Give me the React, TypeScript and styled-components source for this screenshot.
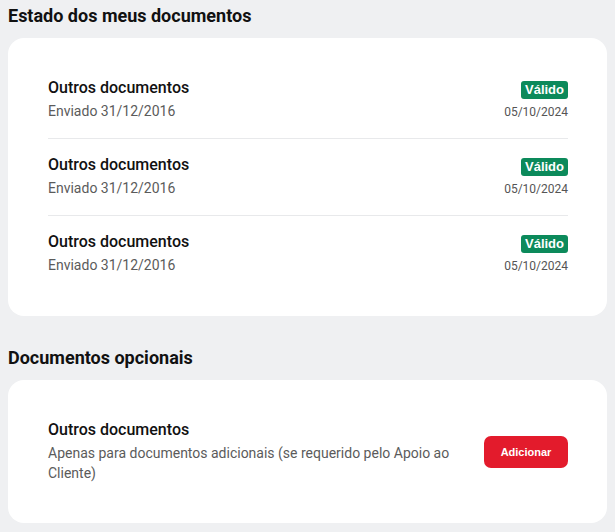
import React from 'react';
import styled, { createGlobalStyle } from 'styled-components';

type DocumentRow = {
  title: string;
  sent: string;
  status: string;
  date: string;
};

const documents: DocumentRow[] = [
  { title: 'Outros documentos', sent: 'Enviado 31/12/2016', status: 'Válido', date: '05/10/2024' },
  { title: 'Outros documentos', sent: 'Enviado 31/12/2016', status: 'Válido', date: '05/10/2024' },
  { title: 'Outros documentos', sent: 'Enviado 31/12/2016', status: 'Válido', date: '05/10/2024' },
];

const GlobalStyle = createGlobalStyle`
  html, body {
    margin: 0;
    padding: 0;
    background: #eff0f2;
  }

  body {
    font-family: Roboto, "Liberation Sans", Arial, sans-serif;
    color: #111;
  }
`;

const Page = styled.div`
  padding: 4px 8px 8px 8px;
  display: flex;
  flex-direction: column;
  gap: 30px;
`;

const Section = styled.section`
  display: flex;
  flex-direction: column;
  gap: 10px;
`;

const SectionTitle = styled.h2`
  margin: 0;
  font-size: 18px;
  line-height: 24px;
  font-weight: 700;
  color: #111;
`;

const Card = styled.div<{ $bottom?: number }>`
  background: #fff;
  border-radius: 16px;
  padding: 40px 39px ${(p) => p.$bottom ?? 40}px 40px;
`;

const Row = styled.div`
  display: flex;
  justify-content: space-between;
  align-items: flex-start;

  & + & {
    border-top: 1px solid #e8e9eb;
    margin-top: 17px;
    padding-top: 16px;
  }
`;

const Info = styled.div`
  display: flex;
  flex-direction: column;
  gap: 3px;
`;

const DocTitle = styled.div`
  font-size: 16px;
  line-height: 20px;
  font-weight: 500;
  color: #111;
`;

const DocText = styled.div`
  font-size: 14px;
  line-height: 20px;
  color: #5b5b5b;
`;

const Status = styled.div`
  display: flex;
  flex-direction: column;
  align-items: flex-end;
  gap: 5px;
  margin-top: 3px;
`;

const Badge = styled.span`
  display: inline-block;
  background: #0c8a5b;
  color: #fff;
  font-family: "Liberation Sans", Arial, sans-serif;
  font-weight: 700;
  font-size: 13px;
  line-height: 18px;
  padding: 0 4px;
  border-radius: 3px;
`;

const DateText = styled.span`
  font-size: 12px;
  line-height: 16px;
  color: #555;
`;

const OptionalRow = styled.div`
  display: flex;
  align-items: center;
  justify-content: space-between;
  gap: 24px;
`;

const AddButton = styled.button`
  flex-shrink: 0;
  width: 84px;
  height: 32px;
  border: none;
  border-radius: 7px;
  background: #e31b2c;
  color: #fff;
  font-family: "Liberation Sans", Arial, sans-serif;
  font-weight: 700;
  font-size: 11px;
  cursor: pointer;
`;

const App: React.FC = () => {
  return (
    <>
      <GlobalStyle />
      <Page>
        <Section>
          <SectionTitle>Estado dos meus documentos</SectionTitle>
          <Card $bottom={41}>
            {documents.map((doc, i) => (
              <Row key={i}>
                <Info>
                  <DocTitle>{doc.title}</DocTitle>
                  <DocText>{doc.sent}</DocText>
                </Info>
                <Status>
                  <Badge>{doc.status}</Badge>
                  <DateText>{doc.date}</DateText>
                </Status>
              </Row>
            ))}
          </Card>
        </Section>

        <Section>
          <SectionTitle>Documentos opcionais</SectionTitle>
          <Card>
            <OptionalRow>
              <Info>
                <DocTitle>Outros documentos</DocTitle>
                <DocText>
                  Apenas para documentos adicionais (se requerido pelo Apoio ao Cliente)
                </DocText>
              </Info>
              <AddButton type="button">Adicionar</AddButton>
            </OptionalRow>
          </Card>
        </Section>
      </Page>
    </>
  );
};

export default App;
